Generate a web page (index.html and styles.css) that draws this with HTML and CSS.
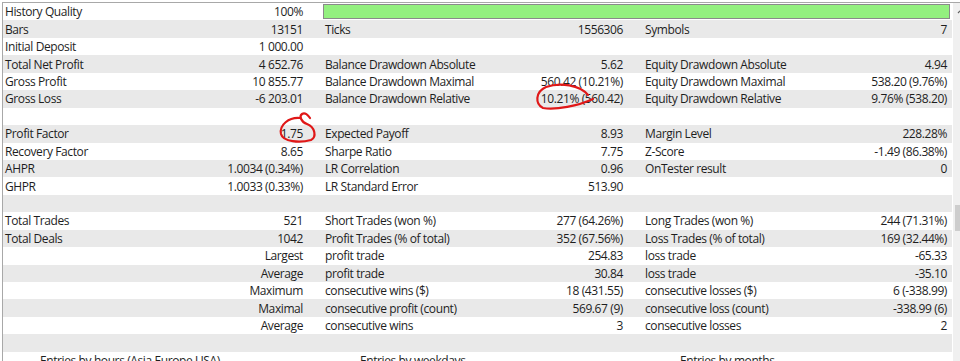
FILE: index.html
```html
<!DOCTYPE html>
<html>
<head>
<meta charset="utf-8">
<link rel="stylesheet" href="styles.css">
</head>
<body>
<div class="frame">
  <div class="table">
    <div class="row">
      <div class="cell"><span>History Quality</span><span>100%</span></div>
      <div class="barcell"><div class="bar"></div></div>
    </div>
    <div class="row g">
      <div class="cell"><span>Bars</span><span>13151</span></div>
      <div class="cell"><span>Ticks</span><span>1556306</span></div>
      <div class="cell"><span>Symbols</span><span>7</span></div>
    </div>
    <div class="row">
      <div class="cell"><span>Initial Deposit</span><span>1 000.00</span></div>
      <div class="cell"></div>
      <div class="cell"></div>
    </div>
    <div class="row g">
      <div class="cell"><span>Total Net Profit</span><span>4 652.76</span></div>
      <div class="cell"><span>Balance Drawdown Absolute</span><span>5.62</span></div>
      <div class="cell"><span>Equity Drawdown Absolute</span><span>4.94</span></div>
    </div>
    <div class="row">
      <div class="cell"><span>Gross Profit</span><span>10 855.77</span></div>
      <div class="cell"><span>Balance Drawdown Maximal</span><span>560.42 (10.21%)</span></div>
      <div class="cell"><span>Equity Drawdown Maximal</span><span>538.20 (9.76%)</span></div>
    </div>
    <div class="row g">
      <div class="cell"><span>Gross Loss</span><span>-6 203.01</span></div>
      <div class="cell"><span>Balance Drawdown Relative</span><span>10.21% (560.42)</span></div>
      <div class="cell"><span>Equity Drawdown Relative</span><span>9.76% (538.20)</span></div>
    </div>
    <div class="row"></div>
    <div class="row g">
      <div class="cell"><span>Profit Factor</span><span>1.75</span></div>
      <div class="cell"><span>Expected Payoff</span><span>8.93</span></div>
      <div class="cell"><span>Margin Level</span><span>228.28%</span></div>
    </div>
    <div class="row">
      <div class="cell"><span>Recovery Factor</span><span>8.65</span></div>
      <div class="cell"><span>Sharpe Ratio</span><span>7.75</span></div>
      <div class="cell"><span>Z-Score</span><span>-1.49 (86.38%)</span></div>
    </div>
    <div class="row g">
      <div class="cell"><span>AHPR</span><span>1.0034 (0.34%)</span></div>
      <div class="cell"><span>LR Correlation</span><span>0.96</span></div>
      <div class="cell"><span>OnTester result</span><span>0</span></div>
    </div>
    <div class="row">
      <div class="cell"><span>GHPR</span><span>1.0033 (0.33%)</span></div>
      <div class="cell"><span>LR Standard Error</span><span>513.90</span></div>
      <div class="cell"></div>
    </div>
    <div class="row g"></div>
    <div class="row">
      <div class="cell"><span>Total Trades</span><span>521</span></div>
      <div class="cell"><span>Short Trades (won %)</span><span>277 (64.26%)</span></div>
      <div class="cell"><span>Long Trades (won %)</span><span>244 (71.31%)</span></div>
    </div>
    <div class="row g">
      <div class="cell"><span>Total Deals</span><span>1042</span></div>
      <div class="cell"><span>Profit Trades (% of total)</span><span>352 (67.56%)</span></div>
      <div class="cell"><span>Loss Trades (% of total)</span><span>169 (32.44%)</span></div>
    </div>
    <div class="row">
      <div class="cell"><span></span><span>Largest</span></div>
      <div class="cell"><span>profit trade</span><span>254.83</span></div>
      <div class="cell"><span>loss trade</span><span>-65.33</span></div>
    </div>
    <div class="row g">
      <div class="cell"><span></span><span>Average</span></div>
      <div class="cell"><span>profit trade</span><span>30.84</span></div>
      <div class="cell"><span>loss trade</span><span>-35.10</span></div>
    </div>
    <div class="row">
      <div class="cell"><span></span><span>Maximum</span></div>
      <div class="cell"><span>consecutive wins ($)</span><span>18 (431.55)</span></div>
      <div class="cell"><span>consecutive losses ($)</span><span>6 (-338.99)</span></div>
    </div>
    <div class="row g">
      <div class="cell"><span></span><span>Maximal</span></div>
      <div class="cell"><span>consecutive profit (count)</span><span>569.67 (9)</span></div>
      <div class="cell"><span>consecutive loss (count)</span><span>-338.99 (6)</span></div>
    </div>
    <div class="row">
      <div class="cell"><span></span><span>Average</span></div>
      <div class="cell"><span>consecutive wins</span><span>3</span></div>
      <div class="cell"><span>consecutive losses</span><span>2</span></div>
    </div>
    <div class="row g"></div>
    <div class="row">
      <div class="cell entry"><span>Entries by hours (Asia Europe USA)</span></div>
      <div class="cell entry"><span>Entries by weekdays</span></div>
      <div class="cell entry"><span>Entries by months</span></div>
    </div>
  </div>
  <div class="scrollbar">
    <svg class="arrow" width="17" height="12" viewBox="0 0 17 12"><path d="M5 8 L8.5 4.5 L12 8" fill="none" stroke="#606060" stroke-width="1.2"/></svg>
    <div class="thumb"></div>
  </div>
</div>
<svg class="marks" width="960" height="361" viewBox="0 0 960 361">
  <path d="M300 118 C289 117 279 125 281 134 C283 142 300 143 311 140 C317 137 315 127 307 124 C301 122 299 116 302 114 C305 112 308 115 310 118" fill="none" stroke="#e01818" stroke-width="2.2" stroke-linecap="round"/>
  <path d="M588 95 C580 85 560 82 546 87 C535 92 535 104 543 108 C556 110 578 106 593 99" fill="none" stroke="#e01818" stroke-width="2.2" stroke-linecap="round"/>
</svg>
</body>
</html>
```

FILE: styles.css
```css
html, body {
  margin: 0;
  padding: 0;
  background: #ffffff;
  overflow: hidden;
}
body {
  width: 960px;
  height: 361px;
  position: relative;
  font-family: "Open Sans", "Noto Sans", sans-serif;
  font-size: 12px;
  letter-spacing: -0.4px;
  color: #1e1e1e;
}
.frame {
  display: flex;
  margin: 2px 0 0 2px;
  width: 975px;
  height: 358px;
  border-left: 1px solid #a8a8a8;
  border-top: 1px solid #a8a8a8;
  overflow: hidden;
}
.table {
  width: 949px;
  flex: none;
}
.row {
  display: grid;
  grid-template-columns: 320px 320px 309px;
  height: 17.45px;
  align-items: center;
  line-height: 17px;
}
.row.g {
  background: #e9e9e9;
}
.cell {
  display: flex;
  justify-content: space-between;
  padding: 0 20px 0 2px;
  white-space: nowrap;
}
.cell:nth-child(3) {
  padding-right: 5px;
}
.cell.entry {
  padding-left: 37px;
}
.barcell {
  grid-column: 2 / 4;
  padding-right: 2px;
  display: flex;
  align-items: center;
}
.bar {
  flex: 1;
  height: 13px;
  background: #93f07f;
  border: 1px solid #8a8a8a;
}
.scrollbar {
  width: 17px;
  flex: none;
  margin-left: 1px;
  background: #f0f0f0;
  display: flex;
  flex-direction: column;
}
.arrow {
  display: block;
  margin-top: 2px;
}
.thumb {
  margin-top: 188px;
  margin-left: 2px;
  width: 13px;
  height: 26px;
  background: #cdcdcd;
}
.marks {
  position: absolute;
  left: 0;
  top: 0;
  pointer-events: none;
}
```
